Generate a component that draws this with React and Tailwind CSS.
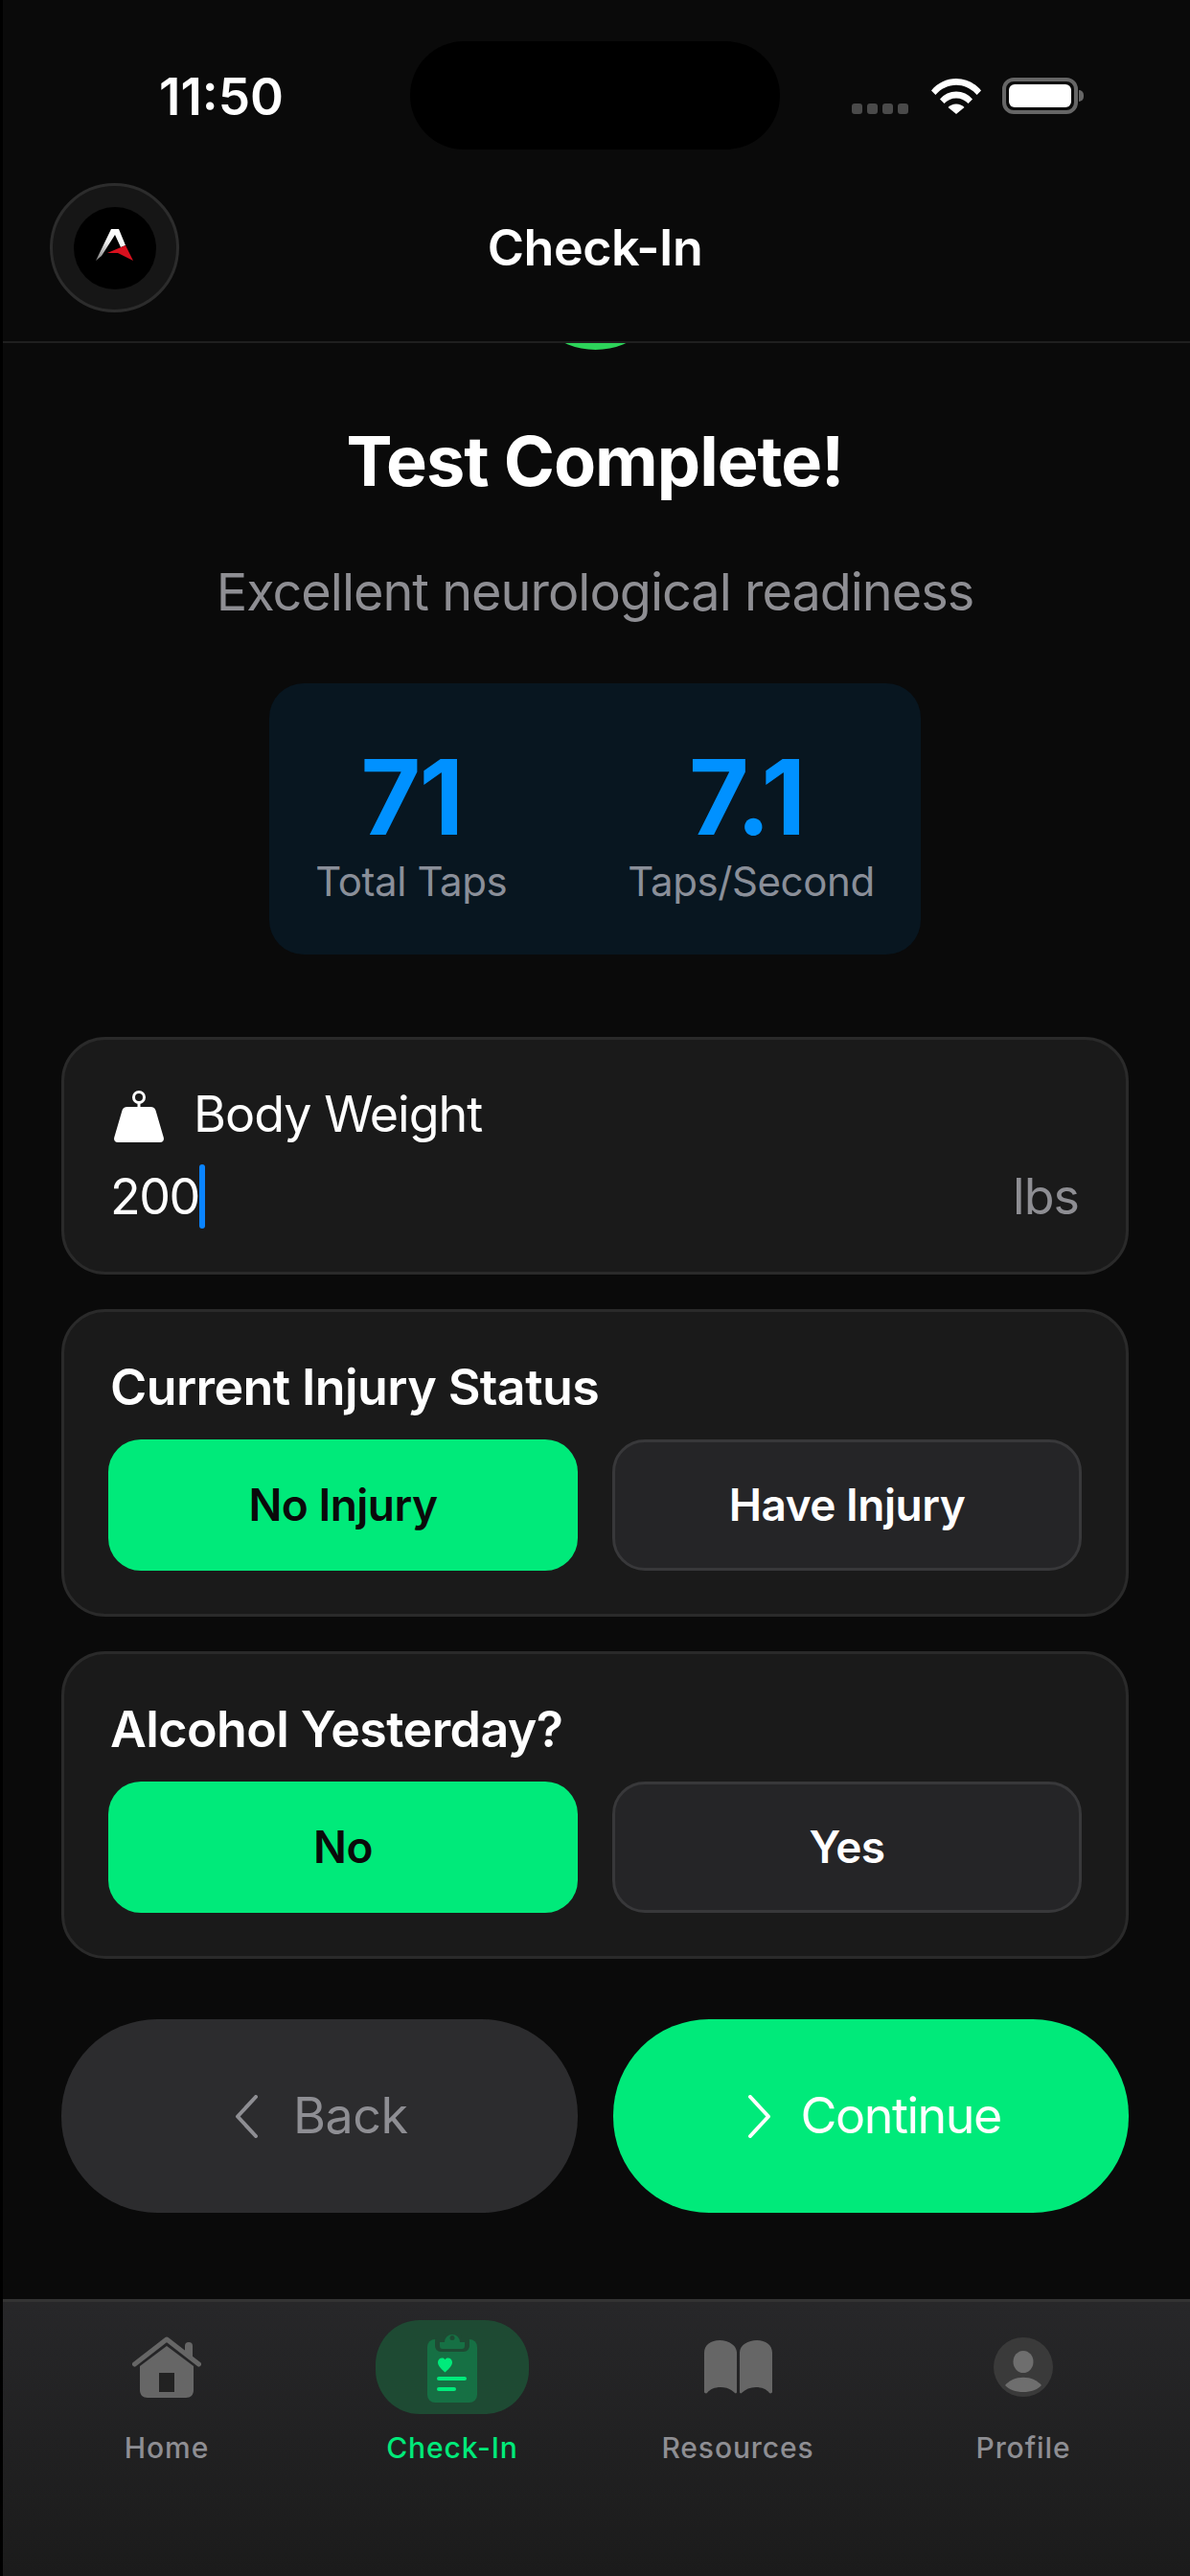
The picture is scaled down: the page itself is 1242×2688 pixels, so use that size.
import React from "react";

const font = { fontFamily: "Inter, 'Noto Sans', sans-serif" };

/** Status bar glyphs */
const WifiIcon = () => (
  <svg viewBox="0 0 52 38" className="w-[52px] h-[38px]" fill="#fff">
    <path d="M0 13.5C6.8 5.3 16 1 26 1s19.2 4.3 26 12.5l-4.4 4.6C41.8 11.4 34.3 7.8 26 7.8S10.2 11.4 4.4 18.1z" />
    <path d="M9 22.5C13.3 17.4 19.4 14.5 26 14.5s12.7 2.9 17 8l-4.5 4.6C35.3 23.5 30.8 21.5 26 21.5s-9.3 2-12.5 5.6z" />
    <path d="M17.5 31C19.7 28.7 22.7 27.5 26 27.5s6.3 1.2 8.5 3.5L26 38z" />
  </svg>
);

const BatteryIcon = () => (
  <div className="flex items-center">
    <div className="w-[79px] h-[38px] rounded-[12px] border-[4px] border-[#666] p-[3px]">
      <div className="w-full h-full rounded-[6px] bg-white" />
    </div>
    <div className="ml-[1px] w-[5px] h-[12px] rounded-r-full bg-[#666]" />
  </div>
);

const Logo = () => (
  <div className="w-[135px] h-[135px] rounded-full bg-[#161616] border-[3px] border-[#2c2c2c] flex items-center justify-center">
    <div className="w-[86px] h-[86px] rounded-full bg-black flex items-center justify-center">
      <svg viewBox="0 0 39 33" className="w-[39px] h-[33px] mb-[6px]">
        <defs>
          <linearGradient id="logoWhite" x1="0" y1="1" x2="0.6" y2="0">
            <stop offset="0" stopColor="#777" />
            <stop offset="0.6" stopColor="#eee" />
            <stop offset="1" stopColor="#fff" />
          </linearGradient>
        </defs>
        <path d="M0 33L16 0h8l7 17-5 2L20 6 6 28z" fill="url(#logoWhite)" />
        <path d="M12 25L31 17l8 16-16-8z" fill="#d9101e" />
      </svg>
    </div>
  </div>
);

const KettlebellIcon = () => (
  <svg viewBox="0 0 52 54" className="w-[52px] h-[54px] ml-[3px]" fill="#fff">
    <circle cx="26" cy="7" r="5.5" fill="none" stroke="#fff" strokeWidth="3" />
    <path d="M24.5 12h3v6h-3z" />
    <path d="M14 17h24c3 0 5 1.5 5.6 4L51.8 49c.7 2.8-.8 5-3.8 5H4c-3 0-4.5-2.2-3.8-5L8.4 21C9 18.5 11 17 14 17z" />
  </svg>
);

const ChevronLeft = ({ color }) => (
  <svg viewBox="0 0 24 45" className="w-[24px] h-[45px]" fill="none" stroke={color} strokeWidth="4" strokeLinecap="round" strokeLinejoin="round">
    <path d="M22 2L3 22.5 22 43" />
  </svg>
);

const ChevronRight = ({ color }) => (
  <svg viewBox="0 0 24 45" className="w-[24px] h-[45px]" fill="none" stroke={color} strokeWidth="4" strokeLinecap="round" strokeLinejoin="round">
    <path d="M2 2l19 20.5L2 43" />
  </svg>
);

/** Tab bar icons */
const HomeIcon = () => (
  <svg viewBox="0 0 72 64" className="w-[72px] h-[64px]">
    <path d="M8 31L36 10l28 21v25c0 5-3 8-8 8H16c-5 0-8-3-8-8z" fill="#666" />
    <path d="M2.5 29L36 3l33.5 26" fill="none" stroke="#666" strokeWidth="5" strokeLinecap="round" strokeLinejoin="round" />
    <path d="M55 10a4 4 0 0 1 8 0v14l-8-6z" fill="#666" />
    <rect x="28" y="38" width="16" height="20" fill="#222" />
  </svg>
);

const ClipboardIcon = () => (
  <svg viewBox="0 0 52 74" className="w-[52px] h-[74px]">
    <rect x="0" y="8" width="52" height="66" rx="8" fill="#167044" />
    <path d="M10 7h6a10 10 0 0 1 20 0h6a2 2 0 0 1 2 2v6a6 6 0 0 1-6 6H14a6 6 0 0 1-6-6V9a2 2 0 0 1 2-2z" fill="#1e4a33" />
    <path d="M13 11h5a8 8 0 0 1 16 0h5v4a3 3 0 0 1-3 3H16a3 3 0 0 1-3-3z" fill="#167044" />
    <circle cx="26" cy="6.5" r="2.5" fill="#1e4a33" />
    <path d="M18.5 42.5C13 37.5 11 35 11 32c0-2.5 2-4.5 4.5-4.5 1.3 0 2.3.6 3 1.7.7-1.1 1.7-1.7 3-1.7 2.5 0 4.5 2 4.5 4.5 0 3-2 5.5-7.5 10.5z" fill="#00eb7b" />
    <rect x="10" y="47" width="31" height="4" rx="2" fill="#00eb7b" />
    <rect x="10" y="58" width="20" height="4" rx="2" fill="#00eb7b" />
  </svg>
);

const BookIcon = () => (
  <svg viewBox="0 0 71 56" className="w-[71px] h-[56px]" fill="#666">
    <path d="M0 13C0 5 7 0 16 0s18 5 18 13v41c0 1-1 2-2 1-4-4-9-6-15-6S6 51 3 55c-1 1-3 0-3-1z" />
    <path d="M71 13C71 5 64 0 55 0S37 5 37 13v41c0 1 1 2 2 1 4-4 9-6 15-6s11 2 14 6c1 1 3 0 3-1z" />
  </svg>
);

const ProfileIcon = () => (
  <svg viewBox="0 0 62 62" className="w-[62px] h-[62px]">
    <circle cx="31" cy="31" r="31" fill="#3a3a3a" />
    <ellipse cx="31" cy="25.5" rx="10.5" ry="11.5" fill="#6e6e6e" />
    <path d="M12 50C16 45 23 41.7 31 41.7S46 45 50 50c-4 4.5-11 7-19 7S16 54.5 12 50z" fill="#6e6e6e" />
  </svg>
);

const Stat = ({ value, label, nudge }) => (
  <div className="flex flex-col items-center">
    <div className={`text-[108px] leading-[108px] font-bold text-[#0091ff] ${nudge ? "mr-[8px]" : "tracking-[-2px]"}`}>{value}</div>
    <div className="mt-[8px] text-[42px] leading-[52px] tracking-[-0.4px] text-[#8a8f99]">{label}</div>
  </div>
);

const ChoiceCard = ({ title, left, right }) => (
  <div className="h-[321px] rounded-[46px] bg-[#1a1a1a] border-[3px] border-[#2a2a2a] pt-[49px] px-[46px]">
    <div className="ml-[2px] text-[52px] leading-[60px] font-semibold tracking-[-0.6px] text-white">{title}</div>
    <div className="mt-[24px] grid grid-cols-2 gap-[36px]">
      <div className="h-[137px] rounded-[34px] bg-[#00ea7a] flex items-center justify-center text-[46px] font-semibold tracking-[-0.5px] text-[#0a0a0a]">
        {left}
      </div>
      <div className="h-[137px] rounded-[34px] bg-[#252527] border-[3px] border-[#38383a] flex items-center justify-center text-[46px] font-semibold tracking-[-0.5px] text-white">
        {right}
      </div>
    </div>
  </div>
);

const Tab = ({ icon, label, active }) => (
  <div className="w-[298px] flex flex-col items-center">
    <div className={`w-[160px] h-[98px] rounded-[46px] flex items-center justify-center ${active ? "bg-[#1e4a33]" : ""}`}>
      {icon}
    </div>
    <div className={`mt-[17px] text-[30px] leading-[36px] font-medium tracking-[0.9px] ${active ? "text-[#00ea7a]" : "text-[#8e8e93]"}`}>
      {label}
    </div>
  </div>
);

export default function App() {
  return (
    <div className="w-[1242px] h-[2688px] overflow-hidden bg-black pl-[3px] flex flex-col" style={font}>
      <div className="flex-1 flex flex-col bg-[#0a0a0a]">
        {/* Status bar */}
        <div className="h-[170px] flex items-start">
          <div className="w-[425px] pl-[163px] pt-[67px] text-[53px] leading-[68px] font-semibold text-white">11:50</div>
          <div className="mt-[43px] w-[386px] h-[113px] rounded-full bg-black" />
          <div className="ml-[75px] mt-[81px] flex items-start">
            <div className="mt-[27px] flex gap-[5px]">
              <div className="w-[11px] h-[11px] rounded-[3px] bg-[#4a4a4a]" />
              <div className="w-[11px] h-[11px] rounded-[3px] bg-[#4a4a4a]" />
              <div className="w-[11px] h-[11px] rounded-[3px] bg-[#4a4a4a]" />
              <div className="w-[11px] h-[11px] rounded-[3px] bg-[#4a4a4a]" />
            </div>
            <div className="ml-[24px]"><WifiIcon /></div>
            <div className="ml-[22px]"><BatteryIcon /></div>
          </div>
        </div>

        {/* Header */}
        <div className="h-[188px] border-b-[2px] border-[#1f1f1f] flex items-center pl-[49px] pb-[9px] relative">
          <Logo />
          <div className="absolute left-0 right-[3px] top-[54px] text-center text-[52px] leading-[70px] font-semibold tracking-[-0.5px] text-white">Check-In</div>
        </div>

        {/* Content */}
        <div className="flex-1 flex flex-col items-center pl-[61px] pr-[64px]">
          <div className="w-[66px] h-[7px] overflow-hidden flex justify-center">
            <div className="shrink-0 w-[153px] h-[153px] -mt-[146px] rounded-full bg-[#2dd45a]" />
          </div>
          <div className="mt-[74px] text-[72px] leading-[84px] font-bold tracking-[-1px] text-white">Test Complete!</div>
          <div className="mt-[63px] text-[54px] leading-[64px] tracking-[-1px] text-[#8e8e93]">Excellent neurological readiness</div>
          <div className="mt-[63px] w-[680px] h-[283px] rounded-[36px] bg-[#081620] flex justify-center gap-[126px] pt-[65px]">
            <Stat value="71" label="Total Taps" />
            <Stat value="7.1" label="Taps/Second" nudge />
          </div>

          <div className="mt-[86px] w-full flex flex-col gap-[36px]">
            <div className="h-[248px] rounded-[46px] bg-[#1a1a1a] border-[3px] border-[#2a2a2a] pt-[52px] px-[49px]">
              <div className="flex items-center gap-[31px]">
                <KettlebellIcon />
                <span className="-mt-[4px] text-[52px] leading-[60px] tracking-[-1px] text-white">Body Weight</span>
              </div>
              <div className="mt-[22px] flex items-center justify-between">
                <div className="-ml-[1px] flex items-center">
                  <span className="text-[52px] leading-[67px] tracking-[-1.5px] text-white">200</span>
                  <span className="w-[6px] h-[67px] rounded-full bg-[#0a84ff]" />
                </div>
                <span className="text-[52px] leading-[67px] tracking-[-1px] text-[#8e8e93]">lbs</span>
              </div>
            </div>
            <ChoiceCard title="Current Injury Status" left="No Injury" right="Have Injury" />
            <ChoiceCard title="Alcohol Yesterday?" left="No" right="Yes" />
          </div>

          <div className="mt-[63px] w-full grid grid-cols-2 gap-[37px]">
            <div className="h-[202px] rounded-[100px] bg-[#2c2c2e] flex items-center justify-center gap-[37px] pl-[4px] text-[52px] tracking-[-0.5px] text-[#8e8e93]">
              <ChevronLeft color="#8e8e93" />
              <span>Back</span>
            </div>
            <div className="h-[202px] rounded-[100px] bg-[#00ea7a] flex items-center justify-center gap-[31px] pl-[8px] text-[52px] tracking-[-1.5px] text-white">
              <ChevronRight color="#fff" />
              <span>Continue</span>
            </div>
          </div>
        </div>

        {/* Tab bar */}
        <div className="h-[289px] border-t-[3px] border-[#333] bg-linear-to-b from-[#272729] to-[#1b1b1b] flex pt-[19px] px-[22px]">
          <Tab icon={<HomeIcon />} label="Home" />
          <Tab icon={<ClipboardIcon />} label="Check-In" active />
          <Tab icon={<BookIcon />} label="Resources" />
          <Tab icon={<ProfileIcon />} label="Profile" />
        </div>
      </div>
    </div>
  );
}
